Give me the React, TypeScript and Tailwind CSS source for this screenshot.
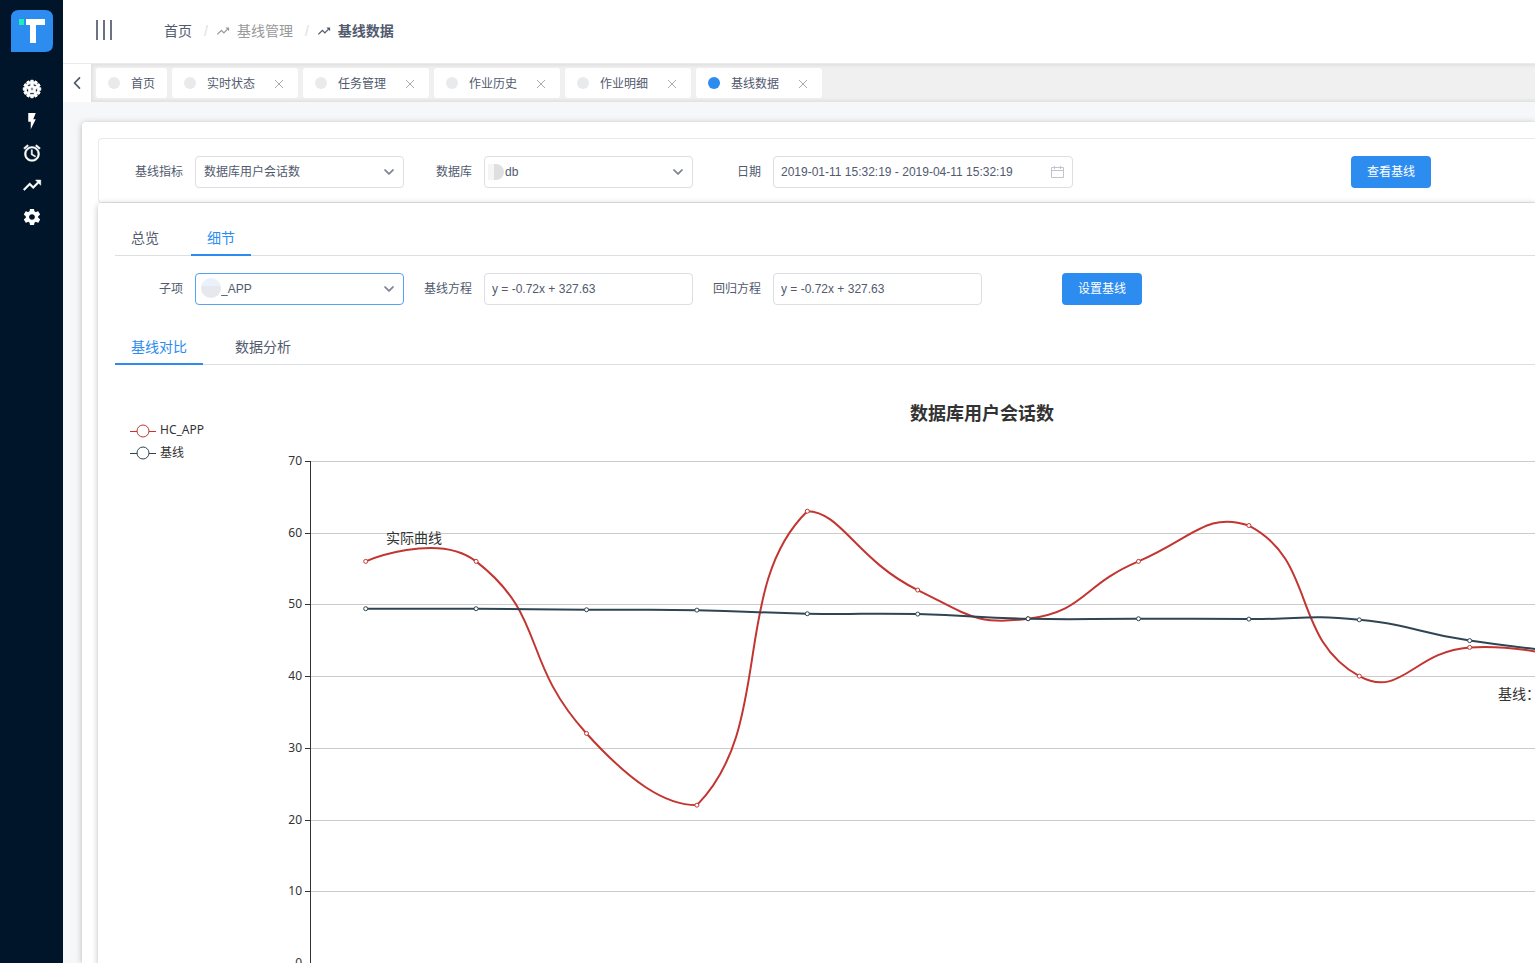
import React from "react";
import {
  IoIosArrowDown,
  IoIosArrowBack,
  IoMdAlarm,
  IoMdCog,
  IoMdFlash,
  IoMdSettings,
  IoMdTrendingUp,
} from "react-icons/io";

const tags = [
  { name: "首页", closable: false },
  { name: "实时状态", closable: true },
  { name: "任务管理", closable: true },
  { name: "作业历史", closable: true },
  { name: "作业明细", closable: true },
  { name: "基线数据", closable: true, active: true },
];

const menu = [
  { name: "监控", icon: IoMdCog, weight: 22 },
  { name: "任务", icon: IoMdFlash, weight: 0 },
  { name: "告警", icon: IoMdAlarm, weight: 12 },
  { name: "基线", icon: IoMdTrendingUp, weight: 12 },
  { name: "设置", icon: IoMdSettings, weight: 0 },
];

// Chart geometry
const AXIS_X = 195;
const AXIS_TOP = 80;
const BAND = 110.4;
const UNIT = 7.17;

const actual = [56, 56, 32, 22, 63, 52, 48, 56, 61, 40, 44, 42];
const baseline = [49.4, 49.4, 49.25, 49.2, 48.7, 48.65, 48, 48, 47.95, 47.85, 44.95, 43.2];

type Point = [number, number];

function toPoints(values: number[]): Point[] {
  return values.map((v, i) => [AXIS_X + 0.5 + BAND * (i + 0.5), AXIS_TOP + (70 - v) * UNIT]);
}

function dist(a: Point, b: Point) {
  return Math.hypot(a[0] - b[0], a[1] - b[1]);
}

// Smooth bezier through all points, control points kept inside the value range
function smoothPath(points: Point[], smooth = 0.5) {
  const ys = points.map((p) => p[1]);
  const min = Math.min(...ys);
  const max = Math.max(...ys);
  const clamp = (y: number) => Math.min(max, Math.max(min, y));

  let d = `M${points[0][0]},${points[0][1]}`;
  let cp0 = points[0];
  for (let i = 1; i < points.length; i++) {
    const p = points[i];
    const prev = points[i - 1];
    const next = points[i + 1] || p;
    const vx = next[0] - prev[0];
    const vy = next[1] - prev[1];
    const ratio = dist(p, next) / (dist(p, next) + dist(p, prev));
    const k = smooth * (1 - ratio);
    const cp1: Point = points[i + 1] ? [p[0] - vx * k, clamp(p[1] - vy * k)] : p;
    d += `C${cp0[0]},${cp0[1]} ${cp1[0]},${cp1[1]} ${p[0]},${p[1]}`;
    cp0 = [p[0] + vx * smooth * ratio, clamp(p[1] + vy * smooth * ratio)];
  }
  return d;
}

function Line({ values, color }: { values: number[]; color: string }) {
  const points = toPoints(values);
  return (
    <g stroke={color}>
      <path d={smoothPath(points)} fill="none" strokeWidth="2" />
      {points.map((p) => (
        <circle key={p[0]} cx={p[0]} cy={p[1]} r="2" fill="#fff" />
      ))}
    </g>
  );
}

function Chart() {
  return (
    <svg
      className="block h-[600px] w-full font-['Noto_Sans','Noto_Sans_CJK_SC',sans-serif]"
      role="img"
      aria-label="数据库用户会话数"
    >
      <text x="867" y="39" textAnchor="middle" className="fill-[#333] text-[18px] font-bold">
        数据库用户会话数
      </text>

      {/* Legend */}
      <g fill="#fff" stroke="#c23531">
        <path d="M15 50.5h26" />
        <circle cx="28" cy="50" r="6" />
      </g>
      <text x="45" y="53" className="fill-[#333] text-xs">HC_APP</text>
      <g fill="#fff" stroke="#2f4554">
        <path d="M15 72.5h26" />
        <circle cx="28" cy="72" r="6" />
      </g>
      <text x="45" y="76" className="fill-[#333] text-xs">基线</text>

      {/* Grid and y axis */}
      {[70, 60, 50, 40, 30, 20, 10, 0].map((v) => {
        const y = Math.round(AXIS_TOP + (70 - v) * UNIT) + 0.5;
        return (
          <g key={v}>
            <path d={`M${AXIS_X} ${y}H1700`} stroke="#ccc" />
            <path d={`M${AXIS_X - 5} ${y}h5`} stroke="#333" />
            <text x={AXIS_X - 8} y={y + 3} textAnchor="end" className="fill-[#333] text-xs">
              {v}
            </text>
          </g>
        );
      })}
      <path d={`M${AXIS_X + 0.5} ${AXIS_TOP}V583`} stroke="#333" />

      <Line values={actual} color="#c23531" />
      <Line values={baseline} color="#2f4554" />

      <text x="271" y="162" className="fill-[#333] text-sm">实际曲线</text>
      <text x="1383" y="318" className="fill-[#333] text-sm">基线：</text>
    </svg>
  );
}

function Field({ id, label, children }: { id: string; label: string; children: React.ReactNode }) {
  return (
    <div className="flex h-8">
      <label htmlFor={id} className="w-20 shrink-0 pr-3 text-right leading-8">
        {label}
      </label>
      {children}
    </div>
  );
}

const inputClass = "h-8 w-full rounded border border-[#dcdee2] bg-white px-[7px] text-[#515a6e] outline-none";

function Select({ id, value, className }: { id: string; value: string; className: string }) {
  return (
    <>
      <select id={id} className={`h-8 w-full appearance-none rounded border bg-white outline-none ${className}`}>
        <option>{value}</option>
      </select>
      <IoIosArrowDown
        className="pointer-events-none absolute top-[9px] right-2 size-3.5 text-[#808695]"
        stroke="currentColor"
        strokeWidth="20"
      />
    </>
  );
}

function Tabs({ items, active }: { items: string[]; active: string }) {
  return (
    <div className="flex h-9 gap-4 border-b border-[#dcdee2] text-sm" role="tablist">
      {items.map((item) => (
        <button
          key={item}
          role="tab"
          aria-selected={item === active}
          className={
            item === active
              ? "-mb-px h-9 border-b-2 border-[#2d8cf0] px-4 pt-0.5 text-[#2d8cf0]"
              : "h-9 px-4"
          }
        >
          {item}
        </button>
      ))}
    </div>
  );
}

export default function App() {
  return (
    <div className="flex h-screen overflow-hidden bg-[#f5f7f9] font-['Liberation_Sans','Noto_Sans_CJK_SC',sans-serif] text-xs text-[#515a6e]">
      {/* Sidebar */}
      <aside className="w-[63px] shrink-0 bg-[#001529]">
        <svg className="mx-auto mt-2.5 block size-[42px]" viewBox="0 0 42 42">
          <path d="M8 0h26q8 0 8 8v26q0 8-8 8H0V8q0-8 8-8z" fill="#2d8cf0" />
          <path d="M15 9h19v6h-9v18h-6V15h-4z" fill="#fff" />
          <path d="M8 9h5v6H8z" fill="#19f0b8" />
        </svg>
        <nav className="mt-[21px] flex flex-col items-center">
          {menu.map(({ name, icon: Icon, weight }) => (
            <a key={name} href="#" aria-label={name} className="flex h-8 items-center text-white">
              <Icon className="size-5" stroke="currentColor" strokeWidth={weight} />
            </a>
          ))}
        </nav>
      </aside>

      <div className="flex min-w-0 flex-1 flex-col">
        {/* Header */}
        <header className="flex h-16 shrink-0 items-center border-b border-[#e8eaec] bg-white pb-1">
          <button aria-label="menu" className="ml-[33px] flex h-5 w-4 justify-between">
            <span className="w-0.5 bg-[#6b7282]" />
            <span className="w-0.5 bg-[#6b7282]" />
            <span className="w-0.5 bg-[#6b7282]" />
          </button>
          <nav className="ml-[52px] flex items-center pt-0.5 text-sm">
            <a href="#">首页</a>
            <span className="mr-2 ml-3 text-[#dcdee2]">/</span>
            <a href="#" className="flex items-center gap-[7px] text-[#999]">
              <IoMdTrendingUp className="size-3.5" />
              基线管理
            </a>
            <span className="mr-2 ml-3 text-[#dcdee2]">/</span>
            <span className="flex items-center gap-[7px] font-bold">
              <IoMdTrendingUp className="size-3.5" />
              基线数据
            </span>
          </nav>
        </header>

        {/* Opened pages */}
        <div className="flex h-[38px] shrink-0">
          <button aria-label="back" className="flex w-7 items-center justify-center bg-white">
            <IoIosArrowBack className="size-[18px]" />
          </button>
          <div className="-mr-2 flex flex-1 items-center gap-[5px] bg-[#f0f0f0] pl-[5px] shadow-[inset_0_0_3px_2px_rgba(100,100,100,0.1)]">
            {tags.map((tag) => (
              <div key={tag.name} className="flex h-[30px] items-center rounded-[3px] bg-white px-3">
                <span className={`mr-[11px] size-3 rounded-full ${tag.active ? "bg-[#2d8cf0]" : "bg-[#e8eaec]"}`} />
                <a href="#" className="pt-0.5">{tag.name}</a>
                {tag.closable && (
                  <button aria-label="close" className="ml-[17px] text-[#aaa]">
                    <svg className="size-3.5" viewBox="0 0 14 14" stroke="currentColor">
                      <path d="M3 4l8 8M11 4l-8 8" />
                    </svg>
                  </button>
                )}
              </div>
            ))}
          </div>
        </div>

        {/* Content */}
        <main className="flex-1 overflow-hidden pt-5 pl-[19px]">
          <div className="h-full rounded-tl bg-white pt-4 pl-4 shadow-[0_1px_6px_rgba(0,0,0,0.25)]">
            <form className="grid grid-cols-[repeat(6,289px)] rounded-l border border-r-0 border-[#e8eaec] pt-[17px] pb-3.5 pl-4">
              <Field id="metric" label="基线指标">
                <div className="relative flex-1">
                  <Select id="metric" value="数据库用户会话数" className="border-[#dcdee2] pl-2" />
                </div>
              </Field>
              <Field id="database" label="数据库">
                <div className="relative flex-1">
                  <Select id="database" value="db" className="border-[#dcdee2] pl-5" />
                  <span className="absolute top-2 left-1 h-4 w-4 rounded-r-full bg-linear-to-r from-[#f5f5f5] from-40% to-[#dfdfe1] to-40%" />
                </div>
              </Field>
              <div className="col-span-2">
                <Field id="date" label="日期">
                  <div className="relative w-[300px]">
                    <input id="date" className={inputClass} defaultValue="2019-01-11 15:32:19 - 2019-04-11 15:32:19" />
                    <svg
                      className="absolute top-2.5 right-2 h-3 w-[15px]"
                      viewBox="0 0 15 12"
                      fill="none"
                      stroke="#c0c4cc"
                    >
                      <path d="M1.5 1.5h12v10h-12zM1.5 4.5h12M4.5 0v3M10.5 0v3" />
                    </svg>
                  </div>
                </Field>
              </div>
              <div className="pl-20">
                <button type="button" className="h-8 w-20 rounded bg-[#2d8cf0] text-white">
                  查看基线
                </button>
              </div>
            </form>

            <section className="h-full rounded-l bg-white pt-[17px] pl-[17px] shadow-[0_1px_6px_rgba(0,0,0,0.25)]">
              <Tabs items={["总览", "细节"]} active="细节" />
              <form className="mt-[17px] mb-6 grid grid-cols-[repeat(6,289px)]">
                <Field id="item" label="子项">
                  <div className="relative flex-1">
                    <Select id="item" value="_APP" className="border-[#57a3f3] pl-[25px]" />
                    <span className="absolute top-[5px] left-1.5 size-5 rounded-full bg-linear-to-b from-[#eaf1fb] from-40% to-[#e6e8ee] to-40%" />
                  </div>
                </Field>
                <Field id="baseline" label="基线方程">
                  <input id="baseline" className={inputClass} defaultValue="y = -0.72x + 327.63" />
                </Field>
                <Field id="regression" label="回归方程">
                  <input id="regression" className={inputClass} defaultValue="y = -0.72x + 327.63" />
                </Field>
                <div className="pl-20">
                  <button type="button" className="h-8 w-20 rounded bg-[#2d8cf0] text-white">
                    设置基线
                  </button>
                </div>
              </form>
              <Tabs items={["基线对比", "数据分析"]} active="基线对比" />
              <div className="pt-4">
                <Chart />
              </div>
            </section>
          </div>
        </main>
      </div>
    </div>
  );
}
